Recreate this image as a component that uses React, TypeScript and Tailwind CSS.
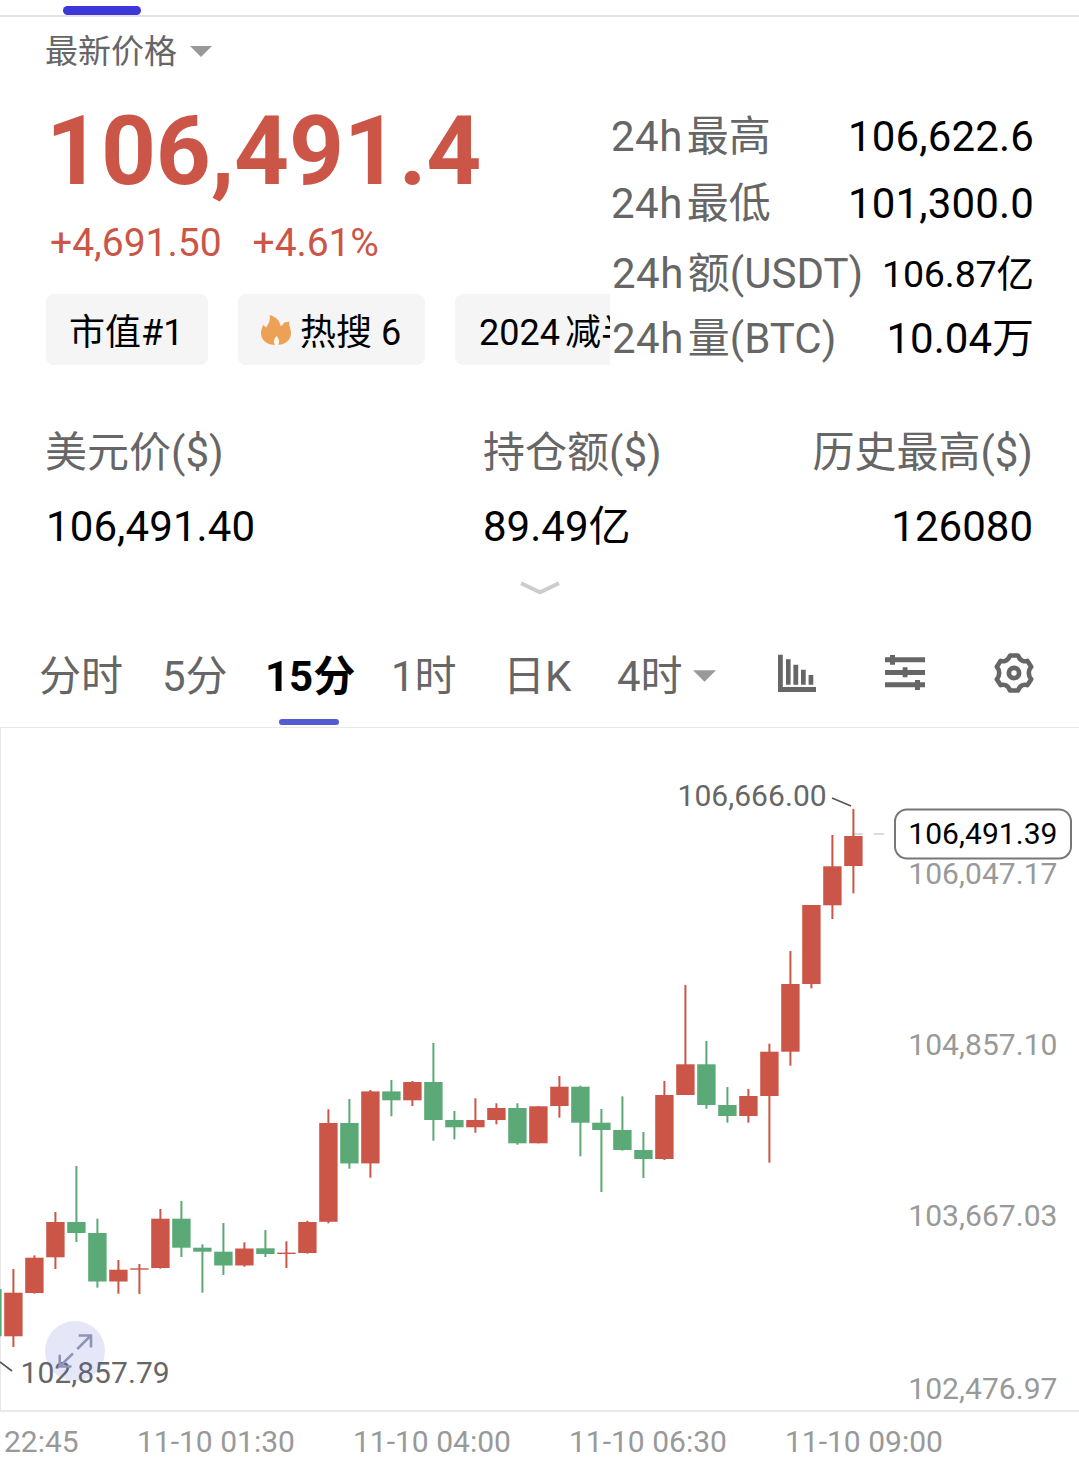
import clsx from 'clsx'

type Tone = 'up' | 'down'
// [tone, high, low, bodyTop, bodyBottom]
type Candle = [Tone, number, number, number, number]

const CHART_TOP = 728
const CHART_HEIGHT = 682
const CANDLE_STEP = 21
const CANDLE_WIDTH = 18.4

const COLORS: Record<Tone, string> = { up: '#cb5647', down: '#5ba977' }

const candles: Candle[] = [
  ['down', 1289, 1336.3, 1289, 1336.3],
  ['up', 1269, 1347, 1292.7, 1336.3],
  ['up', 1255.3, 1293.7, 1257.7, 1293],
  ['up', 1212, 1269, 1222, 1257.3],
  ['down', 1166, 1242, 1222, 1233],
  ['down', 1218.7, 1287.7, 1233, 1281.5],
  ['up', 1260, 1293.7, 1269.7, 1281.5],
  ['up', 1264, 1294, 1268.3, 1269.7],
  ['up', 1209, 1268.7, 1218.7, 1268],
  ['down', 1201, 1257, 1218.7, 1247.7],
  ['down', 1244.3, 1292.7, 1247.7, 1251.7],
  ['down', 1223, 1275, 1251.7, 1265.5],
  ['up', 1242.3, 1266.7, 1248.5, 1265.5],
  ['down', 1230, 1257, 1248.3, 1254],
  ['up', 1241.3, 1268, 1252.6, 1254],
  ['up', 1220.7, 1253.7, 1222, 1253],
  ['up', 1109.3, 1223.3, 1123, 1221.8],
  ['down', 1099, 1168.7, 1123, 1163.4],
  ['up', 1090, 1177.7, 1091.4, 1163.4],
  ['down', 1080, 1116.3, 1091.4, 1100.3],
  ['up', 1081, 1106, 1082, 1100.3],
  ['down', 1043, 1140.7, 1082, 1120],
  ['down', 1111, 1139.3, 1120, 1127.3],
  ['up', 1098.3, 1132.7, 1120, 1127.3],
  ['up', 1103.3, 1124.3, 1108, 1120],
  ['down', 1103.3, 1144.7, 1108, 1143.3],
  ['up', 1106.3, 1143.3, 1106.3, 1143.3],
  ['up', 1076, 1117.7, 1086.7, 1106],
  ['down', 1085.7, 1156.3, 1086.7, 1122.7],
  ['down', 1109, 1192, 1122.7, 1130],
  ['down', 1096.3, 1150.7, 1130, 1150],
  ['down', 1132, 1178, 1150, 1159],
  ['up', 1081, 1160, 1095, 1159],
  ['up', 985, 1095, 1064.3, 1095],
  ['down', 1041, 1108.7, 1064.3, 1105],
  ['down', 1087, 1122.7, 1105, 1116],
  ['up', 1089, 1122.7, 1096, 1116],
  ['up', 1043.7, 1162.7, 1051.7, 1096],
  ['up', 951, 1065.7, 984, 1051.7],
  ['up', 905, 988.3, 905, 984],
  ['up', 835, 919, 866.3, 905.3],
  ['up', 809, 893.3, 836, 866],
]

const priceLabels = [
  { text: '106,047.17', y: 884 },
  { text: '104,857.10', y: 1055 },
  { text: '103,667.03', y: 1226 },
  { text: '102,476.97', y: 1399 },
]

const timeLabels = ['11-10 01:30', '11-10 04:00', '11-10 06:30', '11-10 09:00']

const dayStats = [
  { name: '最高', value: '106,622.6', row: 'h-[67px]', size: 'text-[42px] tracking-[0.150px]' },
  { name: '最低', value: '101,300.0', row: 'h-[67px]', size: 'text-[42px] tracking-[0.150px]' },
  { name: '额(USDT)', value: '106.87亿', row: 'h-[74px] pl-px', size: 'text-[37.500px] tracking-[-0.100px]' },
  { name: '量(BTC)', value: '10.04万', row: 'h-[56px] pl-px', size: 'text-[42px]' },
]

function Caret({ className }: { className?: string }) {
  return (
    <svg viewBox="0 0 22 11" className={clsx('shrink-0 fill-[#999]', className)}>
      <path d="M0 0H22L11 11Z" />
    </svg>
  )
}

function FlameIcon() {
  return (
    <svg viewBox="0 0 30 30" className="h-[30px] w-[30px] shrink-0">
      <path
        d="M8.700 0C14 1.500 18.500 4.500 19.600 11C21.500 10.500 22.500 8.500 23.700 7.200C25.500 7.500 27 7.200 28.500 6.500C27.200 9.500 30 13 30 18C30 25.500 24 30 15 30C6 30 0 25.500 0 18C0 14.500 1.200 11.500 2.700 9.800C3 11 4 12 5.200 12.200C8 9 9.500 4.500 8.700 0Z"
        fill="#eda156"
      />
      <path d="M15.700 21C13 23.700 12 26.500 14 30H17.200C19 27 18 24 15.700 21Z" fill="#fff8ee" />
    </svg>
  )
}

function IndicatorIcon() {
  return (
    <svg viewBox="0 0 38 38" className="h-[38px] w-[38px] fill-[#666]">
      <path d="M0 0.700H4.800V33H38V38H0ZM8 5.300H12.600V30.700H8ZM15.400 10.700H20.200V30.700H15.400ZM23 15.700H27.700V30.700H23ZM30.600 21H35.300V30.700H30.600Z" />
    </svg>
  )
}

function SlidersIcon() {
  return (
    <svg viewBox="0 0 40 36" className="h-[36px] w-[40px] fill-[#666]">
      <path d="M0 2.300H40V7.300H0ZM0 15H40V20H0ZM0 27.300H40V32.300H0Z" />
      <path d="M5 0H10V9.700H5ZM17.700 12.300H22.500V22.300H17.700ZM30 25H35V35H30Z" />
    </svg>
  )
}

function GearIcon() {
  return (
    <svg viewBox="0 0 40 40" className="h-[40px] w-[40px]" fill="none" stroke="#666">
      <path
        strokeWidth="4.600"
        strokeLinejoin="round"
        d="M16 2.500H24Q25.500 6.600 28.600 7.800Q31 8.700 33.300 7.800L37.200 13.700Q34.800 16.500 34.800 20Q34.800 23.500 37.200 26.300L33.300 32.200Q31 31.300 28.600 32.200Q25.500 33.400 24 37.500H16Q14.500 33.400 11.400 32.200Q9 31.300 6.700 32.200L2.800 26.300Q5.200 23.500 5.200 20Q5.200 16.500 2.800 13.700L6.700 7.800Q9 8.700 11.400 7.800Q14.500 6.600 16 2.500Z"
      />
      <circle cx="20" cy="20" r="5.100" strokeWidth="4.800" />
    </svg>
  )
}

function Summary() {
  return (
    <section className="flex h-[353px] justify-between pr-[45px] pl-[46px]">
      <div className="flex w-[564px] flex-col overflow-hidden">
        <div className="-ml-px flex h-[67px] items-center gap-[13px] text-[33px] leading-[67px] text-[#666]">
          <span className="pt-[2px]">最新价格</span>
          <Caret className="mt-[2px] h-[11px] w-[22px]" />
        </div>
        <div className="h-[137px] text-[96px] leading-[135px] font-bold tracking-[-0.200px] text-[#cb5647]">
          106,491.4
        </div>
        <div className="flex h-[43px] gap-[31px] pl-[4px] text-[39px] leading-[45px] text-[#cb5647]">
          <span>+4,691.50</span>
          <span className="tracking-[-0.100px]">+4.61%</span>
        </div>
        <div className="mt-[30px] flex gap-[30px] text-[36px] leading-[79px] whitespace-nowrap text-black">
          <div className="h-[71px] w-[162px] shrink-0 rounded-lg bg-[#f5f5f5] pl-[23px]">市值#1</div>
          <div className="flex h-[71px] w-[187px] shrink-0 rounded-lg bg-[#f5f5f5] pl-[23px]">
            <div className="mt-[21px] mr-[9px]">
              <FlameIcon />
            </div>
            热搜 6
          </div>
          <div className="flex h-[71px] w-[260px] shrink-0 gap-[5px] rounded-lg bg-[#f5f5f5] pl-[24px]">
            <span>2024</span>
            <span>减半</span>
          </div>
        </div>
      </div>
      <div className="-mr-px flex w-[424px] shrink-0 flex-col pt-[86px]">
        {dayStats.map((s) => (
          <div key={s.name} className={clsx('flex items-center justify-between pr-px whitespace-nowrap', s.row)}>
            <div className="flex gap-[4px] text-[42px] leading-[58px] text-[#666]">
              <span className="tracking-[0.500px]">24h</span>
              <span>{s.name}</span>
            </div>
            <div className={clsx('leading-[58px] text-black', s.size)}>{s.value}</div>
          </div>
        ))}
      </div>
    </section>
  )
}

function Stats() {
  return (
    <section className="flex h-[250px] flex-col text-[42px] leading-[74px]">
      <div className="flex justify-between pt-[46px] pr-[46px] pl-[45px]">
        <div className="w-[438px]">
          <div className="text-[#666]">美元价($)</div>
          <div className="pl-px tracking-[0.100px]">106,491.40</div>
        </div>
        <div className="flex-1">
          <div className="text-[#666]">持仓额($)</div>
          <div>89.49亿</div>
        </div>
        <div className="text-right">
          <div className="text-[#666]">历史最高($)</div>
          <div>126080</div>
        </div>
      </div>
      <svg viewBox="0 0 40 14" className="mt-[17px] h-[14px] w-[40px] self-center" fill="none" stroke="#ccc" strokeWidth="4">
        <path d="M1 2.200L20 11.200L39 2.200" />
      </svg>
    </section>
  )
}

function IntervalTabs() {
  return (
    <nav className="flex h-[108px] items-start border-b border-[#e8e8e8] pl-[39px] text-[42px] leading-[114px] whitespace-nowrap text-[#666]">
      <div className="w-[123px]">分时</div>
      <div className="w-[103px]">5分</div>
      <div className="relative w-[126px] font-bold text-black">
        15分
        <span className="absolute top-[99px] left-[14px] h-[6px] w-[60px] rounded-full bg-[#535bd0]" />
      </div>
      <div className="w-[112px]">1时</div>
      <div className="w-[114px]">日K</div>
      <div className="flex w-[161px] gap-[10px]">
        4时
        <Caret className="mt-[50px] h-[12px] w-[23px]" />
      </div>
      <div className="mt-[34px] w-[107px]">
        <IndicatorIcon />
      </div>
      <div className="mt-[35px] w-[109px]">
        <SlidersIcon />
      </div>
      <div className="mt-[33px]">
        <GearIcon />
      </div>
    </nav>
  )
}

function CandleChart() {
  return (
    <div className="relative h-[682px] border-l border-[#e8e8e8]">
      <svg
        viewBox={`0 ${CHART_TOP} 1079 ${CHART_HEIGHT}`}
        width={1079}
        height={CHART_HEIGHT}
        className="-ml-px block text-[30px] tracking-[0.050px]"
      >
        <line x1={852} x2={884} y1={834} y2={834} stroke="#d0d0d0" strokeWidth={1.3} strokeDasharray="11 10.500" />
        {candles.map(([tone, high, low, top, bottom], i) => {
          const x = 13.4 + (i - 1) * CANDLE_STEP
          return (
            <g key={i} fill={COLORS[tone]}>
              <rect x={x - 1} y={high} width={2} height={low - high} />
              <rect x={x - CANDLE_WIDTH / 2} y={top} width={CANDLE_WIDTH} height={bottom - top} />
            </g>
          )
        })}

        {/* high / low markers */}
        <g fill="#666" stroke="none">
          <text x={677.5} y={806}>
            106,666.00
          </text>
          <text x={20.5} y={1383}>
            102,857.79
          </text>
        </g>
        <path d="M832 798L851 806M0 1362L12 1371" stroke="#555" strokeWidth={1.6} />

        {/* price scale */}
        <g fill="#999">
          {priceLabels.map((l) => (
            <text key={l.text} x={908.3} y={l.y}>
              {l.text}
            </text>
          ))}
        </g>
        <rect x={895} y={809.5} width={176} height={49} rx={12} fill="#fff" stroke="#777" strokeWidth={2} />
        <text x={908.3} y={844} fill="#000">
          106,491.39
        </text>
      </svg>

      {/* fullscreen toggle */}
      <button className="absolute top-[593px] left-[44px] h-[60px] w-[60px] rounded-full bg-[#535bd0]/15">
        <svg viewBox="0 0 60 60" className="h-[60px] w-[60px]" fill="none" stroke="#8f93b5" strokeWidth="2.600">
          <path d="M32.300 28L45.700 14.700M33.700 14.500H46V26.500M28 32.300L14.500 45.700M14.700 33.700V45.500H26.500" />
        </svg>
      </button>
    </div>
  )
}

export default function App() {
  return (
    <div className="h-[1480px] w-[1079px] overflow-hidden bg-white font-['Roboto','Noto_Sans_CJK_SC',sans-serif] text-black">
      <div className="h-[17px] border-b-2 border-[#e2e2e2] pt-[6px] pl-[63px]">
        <div className="h-[9px] w-[78px] rounded-full bg-[#3d37d9]" />
      </div>
      <Summary />
      <Stats />
      <IntervalTabs />
      <CandleChart />
      <div className="flex h-[70px] border-t-2 border-[#e8e8e8] pl-[4px] text-[30px] leading-[60px] whitespace-nowrap text-[#999]">
        <div className="w-[133px]">22:45</div>
        {timeLabels.map((t) => (
          <div key={t} className="w-[216px]">
            {t}
          </div>
        ))}
      </div>
    </div>
  )
}
